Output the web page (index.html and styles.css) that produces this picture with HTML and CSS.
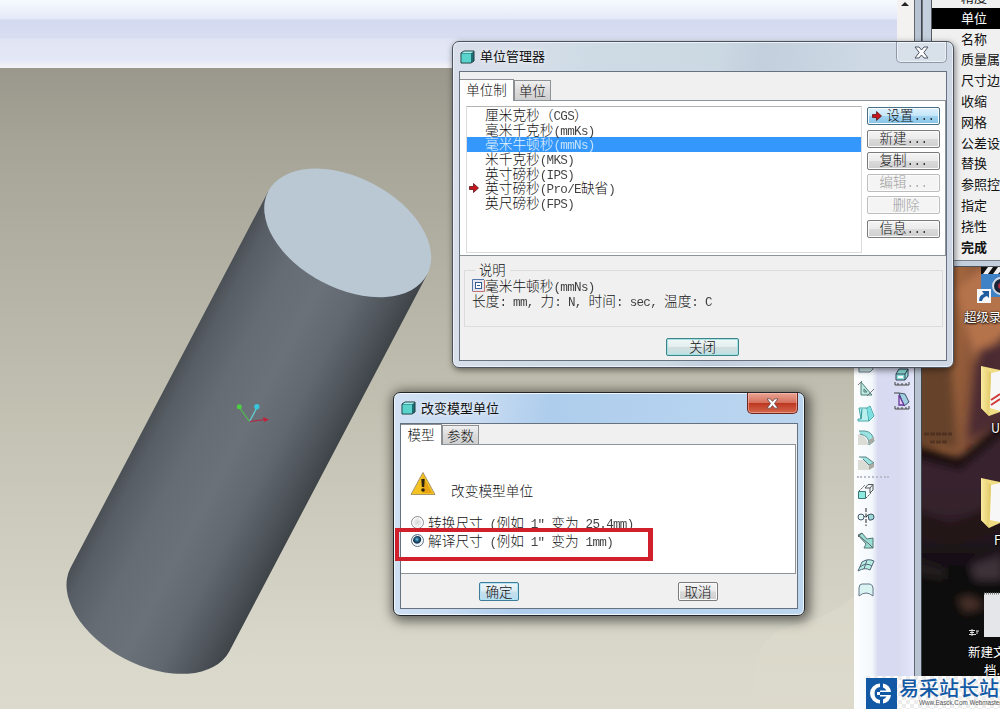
FILE: index.html
```html
<!DOCTYPE html>
<html lang="zh-CN">
<head>
    <meta charset="UTF-8">
    <meta name="viewport" content="width=device-width, initial-scale=1.0">
    <title>单位管理器</title>
    <link rel="stylesheet" href="styles.css">
</head>
<body>

<div class="desktop">

    <!-- modelling window -->
    <div class="app">
        <div class="app-header">
            <div class="app-scroll">
                <svg width="10" height="6" viewBox="0 0 10 6"><path d="M1 5 L5 1 L9 5Z" fill="#222"/></svg>
            </div>
        </div>
        <div class="app-main">
            <div class="viewport">
                <svg class="model" width="854" height="641" viewBox="0 68 854 641">
                    <defs>
                        <linearGradient id="side" x1="0" x2="1" y1="0" y2="0">
                            <stop offset="0" stop-color="#4b5056"/>
                            <stop offset="0.08" stop-color="#585e65"/>
                            <stop offset="0.28" stop-color="#656c74"/>
                            <stop offset="0.5" stop-color="#6a7179"/>
                            <stop offset="0.7" stop-color="#61686f"/>
                            <stop offset="0.88" stop-color="#4e545a"/>
                            <stop offset="1" stop-color="#3f4449"/>
                        </linearGradient>
                    </defs>
                    <path d="M755 709 Q745 640 790 626 Q825 620 854 596 V709Z" fill="#dedbcc" opacity="0.6"/>
                    <g transform="translate(347.7 232.9) rotate(27.7)">
                        <path d="M-89.7 0 V425.4 A89.7 55.3 0 0 0 89.7 425.4 V0Z" fill="url(#side)"/>
                        <ellipse rx="89.7" ry="55.3" fill="#bac8d4"/>
                    </g>
                    <path d="M239 407 L249.500 421.500" stroke="#4fc04a" stroke-width="1.200"/>
                    <path d="M257 407.500 L249.500 421.500" stroke="#62d3d4" stroke-width="1.200"/>
                    <path d="M266 419.500 L249.500 421.500" stroke="#b02c42" stroke-width="1.200"/>
                    <circle cx="239.300" cy="406.800" r="2.500" fill="#4bd03f"/>
                    <circle cx="256.800" cy="406.800" r="2.700" fill="#38c6dc"/>
                    <path d="M263 417 L269 419.500 L264 422Z" fill="#c0233b"/>
                </svg>
            </div>
            <div class="toolbar">
                <div class="tools">
                    <svg viewBox="0 0 18 18"><path d="M2 9 L6 5 H16 V13 L13 16 H2Z" fill="#cfe9e9" stroke="#678"/></svg>
                    <svg viewBox="0 0 18 18"><path d="M4 2 V15 H15Z M7 9 V12 H10Z" fill="#bfe8df" stroke="#4a7f7c"/><path d="M1 5 L5 1 M10 16 L17 9" stroke="#777"/></svg>
                    <svg viewBox="0 0 18 18"><path d="M2 3 H10 L13 1 L17 11 L12 16 H1 V14 H4 Z" fill="#b9f0ee" stroke="#43a8a8"/><path d="M10 3 L12 16 M4 14 L5 4" fill="none" stroke="#2d8f94"/><path d="M10 4 L13 2 L16 11 L12 15Z" fill="#7be0e2"/></svg>
                    <svg viewBox="0 0 18 18"><path d="M1 5 Q8 5 12 16 H1Z" fill="#dcdcd6"/><path d="M2 2 H8 Q16 3 17 12 L12 16 Q13 7 3 5" fill="#9be3e2" stroke="#5f9496"/><path d="M12 11 L17 8 V12 L12 16Z" fill="#a9a9a2"/></svg>
                    <svg viewBox="0 0 18 18"><path d="M1 6 H6 L12 11 V16 H1Z" fill="#dcdcd6"/><path d="M2 3 H9 L17 9 L12 11 L6 5" fill="#9be3e2" stroke="#5a8182"/><path d="M12 11 L17 9 V13 L12 16Z" fill="#aaa9a0"/></svg>
                    <div class="tool-sep"></div>
                    <svg viewBox="0 0 18 18"><path d="M1.500 8.500 H8.500 V15.500 H1.500Z" fill="#8ee9df" stroke="#3a7676"/><path d="M8 5 L11 1.500 H16 V7 L13 10 M8 5 H13 V10 M13 5 L16 1.500" fill="none" stroke="#555"/><path d="M2 8 L8 2 M9 15 L14 10" stroke="#555" stroke-dasharray="2 1"/></svg>
                    <svg viewBox="0 0 18 18"><circle cx="4" cy="9" r="3" fill="#dff6f5" stroke="#456"/><path d="M11 7 L14 6 Q17 6 17 9 Q17 12 14 12 H12Z" fill="#9ad9d8" stroke="#456"/><path d="M6 7 L8 9 M11 7 L9 9" fill="none" stroke="#456"/><path d="M9 0 V18" stroke="#222" stroke-dasharray="4 1.500"/></svg>
                    <svg viewBox="0 0 18 18"><path d="M1 3 L5 1 L10 7 L16 6 V16 H7 L9 12Z" fill="#99ded4" stroke="#577"/><path d="M1 3 L12 12 L16 16 M5 1 L1 5" fill="none" stroke="#666"/></svg>
                    <svg viewBox="0 0 18 18"><path d="M1 14 L5 5 Q11 1 17 4 L13 13 Q8 10 1 14Z" fill="#b7eee4" stroke="#567"/><path d="M3 10 Q9 5 15 9 M10 3 L7 12" fill="none" stroke="#567"/></svg>
                    <svg viewBox="0 0 18 18"><path d="M2 15 V7 Q2 3 5 3 H13 Q16 4 16 7 V15 Q9 9 2 15Z" fill="#d9f3f3" stroke="#678"/></svg>
                </div>
                <div class="tools tools-side">
                    <svg viewBox="0 0 18 18"><path d="M3 6 L6 1 H15 V8 L12 12 H3Z M3 6 H12 V12 M12 6 L15 1" fill="#8ce0dc" stroke="#345"/><path d="M5 8 H10 V10 H5Z" fill="#fff"/><path d="M2 14 V17 H16 V14 M5 15 V17 M9 15 V17 M13 15 V17" fill="none" stroke="#444"/></svg>
                    <svg viewBox="0 0 18 18"><path d="M6 1 L12 2 L16 10 L11 14 Z" fill="#9fcfe0" stroke="#456"/><path d="M6 3 V13 H11 L6 3Z" fill="#e5ccf2" stroke="#63379a" stroke-width="1.300"/><path d="M1 1 H6 M2 14 V17 H16 V14 M5 15 V17 M9 15 V17 M13 15 V17" fill="none" stroke="#444"/></svg>
                </div>
            </div>
        </div>
    </div>
    <div class="app-edge"></div>

    <!-- wallpaper with shortcuts -->
    <div class="wallpaper">
        <svg width="78" height="709" viewBox="922 0 78 709">
            <defs>
                <linearGradient id="wood" x1="0" x2="1" y1="0" y2="0.300">
                    <stop offset="0" stop-color="#7a4527"/>
                    <stop offset="0.45" stop-color="#a5673e"/>
                    <stop offset="1" stop-color="#5e3a30"/>
                </linearGradient>
                <linearGradient id="night" x1="0" x2="0" y1="0" y2="1">
                    <stop offset="0" stop-color="#3c2630"/>
                    <stop offset="0.3" stop-color="#35222c"/>
                    <stop offset="0.5" stop-color="#0d0a0e"/>
                    <stop offset="1" stop-color="#050509"/>
                </linearGradient>
                <linearGradient id="folder" x1="0" x2="1" y1="0" y2="0">
                    <stop offset="0" stop-color="#f9eca0"/>
                    <stop offset="1" stop-color="#e0c867"/>
                </linearGradient>
                <filter id="soft" x="-30%" y="-30%" width="160%" height="160%"><feGaussianBlur stdDeviation="4"/></filter>
            </defs>
            <rect x="922" y="262" width="78" height="250" fill="url(#wood)"/>
            <g filter="url(#soft)">
                <path d="M900 446 L958 458 L1020 415 V730 H900Z" fill="url(#night)"/>
                <path d="M915 362 L952 366 L958 450 L915 442Z" fill="#66432b"/>
                <path d="M955 290 L980 268 L1010 260 V330 L975 360Z" fill="#b5734c"/>
                <path d="M978 350 L1005 340 V420 L968 440Z" fill="#4b2c31"/>
                <path d="M915 444 L960 458 L1005 420 V434 L960 470 L915 458Z" fill="#150c10"/>
                <path d="M915 508 L950 524 L1005 500 V530 L950 545 L915 535Z" fill="#211319"/>
                <path d="M970 565 L1002 555 V580 L975 580Z" fill="#3c3237"/>
                <path d="M918 560 L945 568 V580 L918 575Z" fill="#231b1b"/>
                <path d="M958 598 L972 597 L984 606 L965 612Z" fill="#49302c"/>
            </g>
            <path d="M924 434 H952 M930 442 H948" stroke="#3b2218" stroke-width="3" stroke-dasharray="5 1" opacity="0.500"/>

            <rect x="981" y="267" width="19" height="30" fill="#3f82c5"/>
            <path d="M981 267 H1000 V274 H981Z" fill="#111"/>
            <path d="M983 274 L988 267 H993 L988 274Z M993 274 L998 267 H1000 V272 L998 274Z" fill="#eee"/>
            <circle cx="1001" cy="286" r="8" fill="#1b2338" stroke="#d4d9e6" stroke-width="2"/>
            <circle cx="1001" cy="286" r="3" fill="#b0283c"/>
            <rect x="977" y="289" width="14" height="14" fill="#f5f7fa"/>
            <path d="M979 301 Q979 295 984 294 L982 291 H989 V298 L987 296 Q983 297 982 301Z" fill="#1f5c9e"/>

            <path d="M981 366 L1000 370 V412 L989 416 L981 408Z" fill="#f0dc82"/>
            <path d="M991 373 L1000 371 V411 L990 408Z" fill="#f7f7f7"/>
            <path d="M981 366 L991 373 L989 416 L981 408Z" fill="url(#folder)"/>
            <path d="M991 400 L1000 394 M991 405 L1000 399" stroke="#d23a3a" stroke-width="2"/>
            <path d="M981 478 L1000 482 V523 L989 528 L981 520Z" fill="#f0dc82"/>
            <path d="M991 485 L1000 483 V522 L990 520Z" fill="#f7f7f7"/>
            <path d="M981 478 L991 485 L989 528 L981 520Z" fill="url(#folder)"/>

            <rect x="984" y="593" width="16" height="44" fill="#e4e6ea"/>
            <path d="M984 593.500 H1000" stroke="#777" stroke-width="2" stroke-dasharray="1 1"/>
            <path d="M969 630.500 H975 M970 632.500 H974 M969 634.500 H976 M972 629 V636 M976 631 H979 M977 631 V634" stroke="#ddd" fill="none"/>
        </svg>
        <span class="label label-rec">超级录</span>
        <span class="label label-u">U</span>
        <span class="label label-f">F</span>
        <span class="label label-new">新建文<br><i>档.</i></span>
    </div>

    <!-- menu manager -->
    <div class="menu">
        <ul class="menu-list">
            <li>精度</li>
            <li class="selected">单位</li>
            <li>名称</li>
            <li>质量属性</li>
            <li>尺寸边界</li>
            <li>收缩</li>
            <li>网格</li>
            <li>公差设置</li>
            <li>替换</li>
            <li>参照控制</li>
            <li>指定</li>
            <li>挠性</li>
            <li class="done">完成</li>
        </ul>
    </div>

    <!-- units manager -->
    <div class="window units">
        <div class="title-bar">
            <svg class="cube" width="15" height="14" viewBox="0 0 15 14"><path d="M1 3 L4 1 H14 V11 L11 13 H1Z" fill="#1d6f74" stroke="#233c40"/><path d="M1.500 3.500 H11 V12.500 H1.500Z" fill="#59d3cc"/><path d="M2 3 L4 1.500 H13.500 L11.500 3Z" fill="#a9eee9"/></svg>
            <span class="title">单位管理器</span>
            <button class="close close-clear"><svg width="15" height="13" viewBox="0 0 15 13"><path d="M1 1 H5 L7.500 4 L10 1 H14 L9.800 6.500 L14 12 H10 L7.500 9 L5 12 H1 L5.200 6.500Z" fill="#fff" stroke="#4d5563"/></svg></button>
        </div>
        <div class="client">
            <div class="tabs">
                <div class="tab active">单位制</div>
                <div class="tab">单位</div>
            </div>
            <div class="page units-page">
                <ul class="unit-list">
                    <li>厘米克秒（<b>CGS</b>）</li>
                    <li>毫米千克秒<b>(mmKs)</b></li>
                    <li class="selected">毫米牛顿秒<b>(mmNs)</b></li>
                    <li>米千克秒<b>(MKS)</b></li>
                    <li>英寸磅秒<b>(IPS)</b></li>
                    <li class="current"><svg width="10" height="10" viewBox="0 0 10 10"><path d="M0.500 3.500 H4.500 V0.500 L9.500 5 L4.500 9.500 V6.500 H0.500Z" fill="#c8141e" stroke="#5c1518" stroke-width="0.800"/></svg><span>英寸磅秒<b>(Pro/E</b>缺省<b>)</b></span></li>
                    <li>英尺磅秒<b>(FPS)</b></li>
                </ul>
                <div class="unit-buttons">
                    <button class="btn primary"><svg width="10" height="10" viewBox="0 0 10 10"><path d="M0.500 3.500 H4.500 V0.500 L9.500 5 L4.500 9.500 V6.500 H0.500Z" fill="#c8141e" stroke="#5c1518" stroke-width="0.800"/></svg><span>设置<b>...</b></span></button>
                    <button class="btn"><span>新建<b>...</b></span></button>
                    <button class="btn"><span>复制<b>...</b></span></button>
                    <button class="btn" disabled><span>编辑<b>...</b></span></button>
                    <button class="btn remove" disabled><span>删除</span></button>
                    <button class="btn"><span>信息<b>...</b></span></button>
                </div>
            </div>
            <fieldset class="info">
                <legend>说明</legend>
                <div class="info-line"><svg width="13" height="13" viewBox="0 0 13 13"><rect x="0.500" y="0.500" width="12" height="12" fill="#e4e6f0"/><path d="M0.500 12 V0.500 H12" fill="none" stroke="#5576a8"/><path d="M0.500 12.500 H12.500 V1" fill="none" stroke="#c07474"/><rect x="3.500" y="3.500" width="6" height="6" fill="#fff" stroke="#345b94"/><path d="M5 6.500 H8" stroke="#345b94"/></svg><span>毫米牛顿秒<b>(mmNs)</b></span></div>
                <div class="info-line"><span>长度<b>: mm, </b>力<b>: N, </b>时间<b>: sec, </b>温度<b>: C</b></span></div>
            </fieldset>
            <button class="btn shut"><span>关闭</span></button>
        </div>
    </div>

    <!-- change model units -->
    <div class="window change">
        <div class="title-bar">
            <svg class="cube" width="15" height="14" viewBox="0 0 15 14"><path d="M1 3 L4 1 H14 V11 L11 13 H1Z" fill="#1d6f74" stroke="#233c40"/><path d="M1.500 3.500 H11 V12.500 H1.500Z" fill="#59d3cc"/><path d="M2 3 L4 1.500 H13.500 L11.500 3Z" fill="#a9eee9"/></svg>
            <span class="title">改变模型单位</span>
            <button class="close close-red"><svg width="13" height="11" viewBox="0 0 15 13"><path d="M1 1 H5 L7.500 4 L10 1 H14 L9.800 6.500 L14 12 H10 L7.500 9 L5 12 H1 L5.200 6.500Z" fill="#fff" stroke="#6b4a4a"/></svg></button>
        </div>
        <div class="client">
            <div class="tabs">
                <div class="tab active">模型</div>
                <div class="tab">参数</div>
            </div>
            <div class="page change-page">
                <div class="notice">
                    <svg width="26" height="25" viewBox="0 0 26 25">
                        <path d="M13 1.500 L25 23.500 H1Z" fill="#f4c321" stroke="#a9966a" stroke-linejoin="round"/>
                        <path d="M13 5 L22 22 H13Z" fill="#e8a414"/>
                        <path d="M11.300 8 H14.700 L14.200 16 H11.800Z" fill="#2b2410"/>
                        <circle cx="13" cy="19" r="1.800" fill="#2b2410"/>
                    </svg>
                    <span>改变模型单位</span>
                </div>
                <div class="option"><i class="radio"></i><span>转换尺寸<b> (</b>例如<b> 1″ </b>变为<b> 25.4mm)</b></span></div>
                <div class="option"><i class="radio checked"></i><span>解译尺寸<b> (</b>例如<b> 1″ </b>变为<b> 1mm)</b></span></div>
            </div>
            <div class="actions">
                <button class="btn ok"><span>确定</span></button>
                <button class="btn"><span>取消</span></button>
            </div>
        </div>
    </div>
    <div class="highlight"></div>

    <!-- site badge -->
    <div class="badge">
        <svg width="31" height="31" viewBox="0 0 31 31">
            <rect width="31" height="31" fill="#1159a5"/>
            <path d="M14 5.500 A10 10 0 0 0 14 25.500 V22 A6.600 6.600 0 0 1 14 9Z" fill="#fff"/>
            <path d="M17 5.500 A10 10 0 0 1 25 14 H11 V17 H25 A10 10 0 0 1 17 25.500 V21.500 A6 6 0 0 0 20.500 18.500 H14 V12.500 H20.500 A6 6 0 0 0 17 9.500Z" fill="#fff"/>
        </svg>
        <div class="badge-text">
            <strong>易采站长站</strong>
            <small>Www.Easck.Com Webmaster</small>
        </div>
    </div>

</div>

</body>
</html>
```
FILE: styles.css
```css
* {
    box-sizing: border-box;
}

body {
    margin: 0;
    font-family: "Noto Sans CJK SC", sans-serif;
    font-size: 13px;
    color: #111;
}

ul {
    list-style: none;
    margin: 0;
    padding: 0;
}

svg {
    display: block;
    flex: none;
}

button {
    font: inherit;
    color: inherit;
    padding: 0;
}

.desktop {
    position: relative;
    width: 1000px;
    height: 709px;
    overflow: hidden;
    background: #08070b;
}

/* modelling window */
.app {
    width: 914px;
    height: 709px;
    display: flex;
    flex-direction: column;
    background: #fff;
}

.app-header {
    height: 68px;
    display: flex;
    justify-content: flex-end;
    background: linear-gradient(#f7fbff 0, #e3e9f7 19px, #d3d9ef 20px, #d9ddf2 38px, #e0e4f4 39px, #e4e8f6 60px, #f2f2f8 67px);
}

.app-scroll {
    width: 17px;
    background: #f3f2f1;
    padding: 1px 0 0 3px;
}

.app-main {
    flex: 1;
    display: flex;
}

.viewport {
    width: 854px;
    background: linear-gradient(#9a988c, #a7a598 13%, #c3c1b2 55%, #d9d8cb 92%, #dbdacd);
}

.toolbar {
    width: 60px;
    display: flex;
    padding-top: 285px;
    background: linear-gradient(90deg, #fdfefe, #f3f8fc 18px, #d7daf0 24px, #d7daf0 44px, #e3e6fa 58px);
}

.tools {
    width: 34px;
    display: flex;
    flex-direction: column;
    gap: 6.4px;
    padding: 3px 0 0 3px;
}

.tools svg {
    width: 18px;
    height: 18px;
    fill: none;
}

.tools-side {
    width: 26px;
    padding: 15px 0 0 5px;
}

.tool-sep {
    width: 32px;
    margin: -1.5px 0;
    border-top: 2px dotted #b9bcca;
}

.app-edge {
    position: absolute;
    left: 914px;
    top: 0;
    width: 8px;
    height: 709px;
    background: #b9c4d2;
    border-left: 1px solid #63666e;
    border-right: 1px solid #3d444c;
}

/* wallpaper */
.wallpaper {
    position: absolute;
    left: 922px;
    top: 0;
    width: 78px;
    height: 709px;
    overflow: hidden;
}

.label {
    position: absolute;
    color: #fff;
    font-size: 12.5px;
    line-height: 18px;
    white-space: nowrap;
    text-shadow: 1px 1px 2px #000, 0 0 2px #000;
}

.label i {
    font-style: normal;
    padding-left: 16px;
}

.label-rec {
    left: 42px;
    top: 308px;
}

.label-u {
    left: 69px;
    top: 419px;
}

.label-f {
    left: 72px;
    top: 531px;
}

.label-new {
    left: 46px;
    top: 643px;
}

/* menu manager */
.menu {
    position: absolute;
    left: 922px;
    top: 0;
    width: 78px;
    height: 267px;
    overflow: hidden;
    background: #c3cfdd;
    border-left: 1px solid #70757c;
    border-bottom: 1px solid #4c5158;
    padding-left: 8px;
}

.menu-list {
    height: 274px;
    margin-top: -13px;
    background: #f0f0f0;
    border-left: 1px solid #555b62;
    border-bottom: 1px solid #777e86;
}

.menu-list li {
    height: 20.8px;
    line-height: 20.8px;
    padding-left: 29px;
    white-space: nowrap;
}

.menu-list .selected {
    background: #000;
    color: #fff;
}

.menu-list .done {
    font-weight: bold;
}

/* dialogs */
.window {
    position: absolute;
    padding: 0 6px 6px;
    border: 1px solid #4b535e;
    border-radius: 7px;
    display: flex;
    flex-direction: column;
    font-weight: 300;
}

.window b {
    font-family: "Liberation Mono", monospace;
    font-weight: normal;
    font-size: 12.6px;
    line-height: 1;
    letter-spacing: -0.7px;
    white-space: pre;
    opacity: 0.8;
}

.units {
    left: 452px;
    top: 41px;
    width: 502px;
    height: 327px;
    background: linear-gradient(100deg, #d9dfea 0, #d8dfea 10%, #cedbe5 25%, #cbd9e3 48%, #c3cfdd 56%, #ced9e5 75%, #cfd7e4);
    box-shadow: inset 0 0 0 1px #edf1f6, 1px 2px 6px rgba(0, 0, 0, 0.5);
}

.change {
    left: 393px;
    top: 392px;
    width: 412px;
    height: 224px;
    border-color: #22262b;
    background: linear-gradient(100deg, #d3e1f3 0, #c7dbf2 20%, #aecdec 35%, #b4d2ef 60%, #bdd6ef);
    box-shadow: inset 0 0 0 1px #eff6fc, 2px 2px 12px 3px rgba(0, 0, 0, 0.55);
}

.title-bar {
    height: 29px;
    flex: none;
    display: flex;
    align-items: center;
    padding-left: 1px;
}

.title {
    margin-left: 5px;
    padding-bottom: 2px;
    font-weight: 400;
    text-shadow: 0 0 5px #fff;
}

.close {
    align-self: flex-start;
    margin-left: auto;
    display: flex;
    align-items: center;
    justify-content: center;
    border-radius: 0 0 5px 5px;
}

.close-clear {
    width: 51px;
    height: 21px;
    border: 1px solid #8f99a8;
    border-top: none;
    background: rgba(226, 231, 240, 0.5);
    box-shadow: inset 0 0 0 1px rgba(255, 255, 255, 0.5);
}

.close-red {
    width: 51px;
    height: 21px;
    border: 1px solid #6e2621;
    border-top: none;
    background: linear-gradient(#e9a595, #d5705c 48%, #bd3720 52%, #d4684c);
    box-shadow: inset 0 0 0 1px rgba(255, 200, 185, 0.5);
}

.client {
    flex: 1;
    display: flex;
    flex-direction: column;
    background: #f0f0f0;
    border: 1px solid #66727f;
}

.tabs {
    height: 28px;
    flex: none;
    display: flex;
    align-items: flex-end;
    position: relative;
}

.tab {
    height: 20px;
    width: 37px;
    font-size: 13.5px;
    line-height: 19px;
    text-align: center;
    white-space: nowrap;
    background: linear-gradient(#f0f0f0, #dcdcdc 50%, #cfcfcf);
    border: 1px solid #8d9196;
    border-bottom: none;
}

.tab.active {
    height: 22px;
    width: 54px;
    margin-bottom: -1px;
    line-height: 19px;
    background: #fff;
    border-left: none;
}

.page {
    flex: none;
    background: #fff;
    border: 1px solid #8d9499;
    border-left: none;
}

.units-page {
    width: 486px;
    height: 156px;
    display: flex;
    padding: 5px 5px 0 6px;
    gap: 5px;
}

.unit-list {
    width: 396px;
    height: 147px;
    border: 1px solid #dcdcdc;
    border-top-color: #b4b4b4;
    font-size: 13.7px;
    padding-top: 1px;
}

.unit-list li {
    height: 14.65px;
    line-height: 12.6px;
    padding-left: 18px;
    white-space: nowrap;
}

.unit-list .selected {
    background: #3397fb;
    color: #e8f4ff;
}

.unit-list .current {
    display: flex;
    padding-left: 2px;
}

.unit-list .current svg {
    margin: 2px 6px 0 0;
}

.unit-buttons {
    display: flex;
    flex-direction: column;
    gap: 4px;
    padding-top: 1px;
}

.btn {
    width: 73px;
    height: 18px;
    display: flex;
    align-items: center;
    justify-content: center;
    font-size: 13.5px;
    line-height: 14px;
    font-weight: 300;
    white-space: nowrap;
    border: 1px solid #7b7b7b;
    border-radius: 2px;
    background: linear-gradient(#f4f4f4, #ebebeb 48%, #dadada 52%, #cfcfcf);
    box-shadow: inset 0 0 0 1px #fbfbfb;
}

.btn span {
    padding-bottom: 2px;
}

.unit-buttons .btn:last-child {
    margin-top: 2px;
}

.unit-buttons b {
    letter-spacing: -0.5px;
}

.btn.primary {
    margin-bottom: 1px;
    border-color: #44708a;
    background: linear-gradient(#e0f2fc, #c3e6f9 48%, #9fd3f1 52%, #86c3e6);
}

.btn.primary svg {
    margin-right: 4px;
}

.btn:disabled {
    color: #a0a0a0;
    background: #f4f4f4;
    border-color: #bdbdbd;
}

.btn.remove {
    padding-left: 5px;
}

.info {
    width: 479px;
    height: 66px;
    margin: 5px 0 0 4px;
    padding: 0 0 0 7px;
    border: 1px solid #dcdcdc;
    font-size: 13.7px;
}

.info legend {
    height: 18px;
    margin-left: 3px;
    padding: 0 4px;
    font-size: 13.3px;
    line-height: 17px;
}

.info-line {
    display: flex;
    height: 14.5px;
    line-height: 12px;
    white-space: pre;
}

.btn.shut {
    margin: 11px 0 0 206px;
    border-color: #3d8589;
    background: linear-gradient(#f0f7f7, #e3eeee 48%, #d4dede 52%, #bfe2e5);
    box-shadow: inset 0 0 0 1px #a5e0e4;
}

/* change model units */
.change .title-bar {
    height: 30px;
}

.change .tabs {
    height: 20px;
}

.change .tab {
    height: 19px;
    line-height: 18px;
}

.change .tab.active {
    width: 41px;
    height: 21px;
}

.change-page {
    width: 395px;
    height: 130px;
    padding: 26px 0 0 9px;
}

.notice {
    height: 45px;
    display: flex;
    gap: 15px;
    font-size: 13.7px;
}

.notice span {
    line-height: 20px;
    padding-top: 9px;
}

.option {
    height: 17.5px;
    display: flex;
    font-size: 13.7px;
    line-height: 12px;
    white-space: pre;
}

.radio {
    width: 13px;
    height: 13px;
    margin: 0 4px 0 1px;
    border-radius: 50%;
    border: 1px solid #8b8f94;
    background: radial-gradient(#d5d5d5, #f3f3f3 60%);
    box-shadow: inset 0 0 0 1px #fff;
}

.radio.checked {
    border-color: #5b7187;
    background: radial-gradient(circle at 45% 40%, #79c8e8 0, #1c5478 25%, #12324d 42%, #e6eef4 52%);
}

.actions {
    display: flex;
    justify-content: space-between;
    padding: 8px 79px 0 78px;
}

.actions .btn {
    width: 40px;
    height: 19px;
}

.btn.ok {
    border-color: #3f7c98;
    background: linear-gradient(#eef6fa, #dcebf3 48%, #c8e0ec 52%, #b5dcee);
    box-shadow: inset 0 0 0 1px #b3e4f5;
}

.highlight {
    position: absolute;
    left: 395px;
    top: 528px;
    width: 258px;
    height: 33px;
    border: 4px solid #d0202c;
    border-right-width: 5px;
}

/* site badge */
.badge {
    position: absolute;
    left: 866px;
    top: 676px;
    width: 134px;
    height: 33px;
    display: flex;
    padding-top: 2px;
    background: conic-gradient(#fff 25%, #ececec 0 50%, #fff 0 75%, #ececec 0) 0 0 / 8px 8px;
}

.badge-text {
    margin-left: 2px;
    white-space: nowrap;
}

.badge-text strong {
    display: block;
    font-size: 20px;
    font-weight: 500;
    line-height: 22px;
    margin-top: -1px;
    color: #1159a5;
}

.badge-text small {
    display: block;
    margin-left: 20px;
    font: 6.3px/8px "Liberation Sans", sans-serif;
    color: #555;
}
```
